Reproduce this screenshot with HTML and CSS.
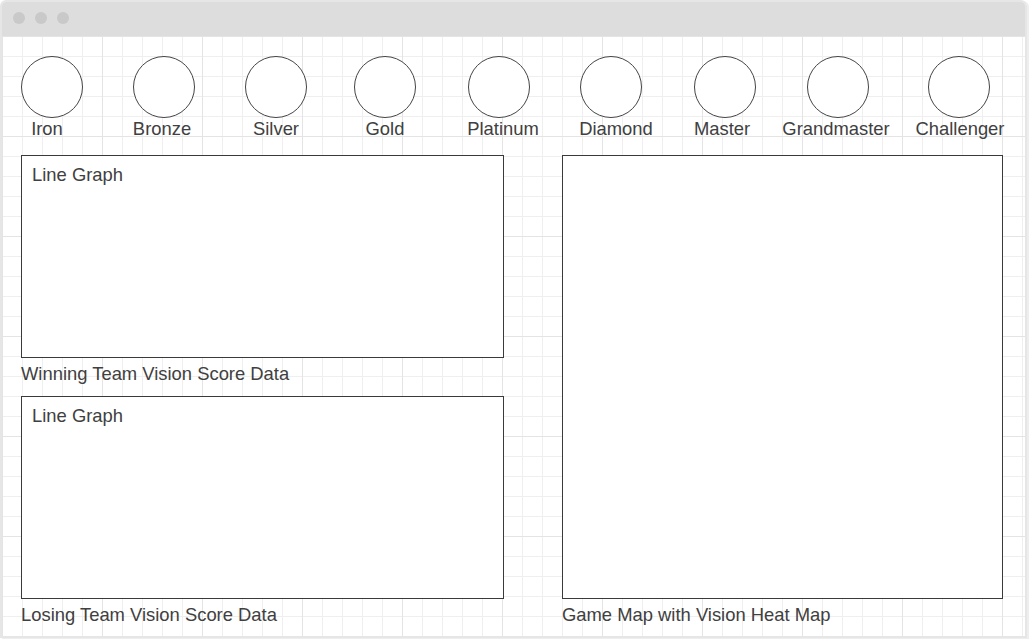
FILE: index.html
```html
<!DOCTYPE html>
<html lang="en">
<head>
<meta charset="utf-8">
<title>Vision Score Mockup</title>
<link rel="stylesheet" href="styles.css">
</head>
<body>
<div class="window">
  <div class="titlebar">
    <span class="dot"></span><span class="dot"></span><span class="dot"></span>
  </div>
  <div class="content">
    <div class="ranks">
      <div class="rank r1"><div class="circle"></div><div class="rank-label">Iron</div></div>
      <div class="rank r2"><div class="circle"></div><div class="rank-label">Bronze</div></div>
      <div class="rank r3"><div class="circle"></div><div class="rank-label">Silver</div></div>
      <div class="rank r4"><div class="circle"></div><div class="rank-label">Gold</div></div>
      <div class="rank r5"><div class="circle"></div><div class="rank-label">Platinum</div></div>
      <div class="rank r6"><div class="circle"></div><div class="rank-label">Diamond</div></div>
      <div class="rank r7"><div class="circle"></div><div class="rank-label">Master</div></div>
      <div class="rank r8"><div class="circle"></div><div class="rank-label">Grandmaster</div></div>
      <div class="rank r9"><div class="circle"></div><div class="rank-label">Challenger</div></div>
    </div>
    <div class="panels">
      <div class="box graph-win"><span class="box-title">Line Graph</span></div>
      <div class="caption cap-win">Winning Team Vision Score Data</div>
      <div class="box graph-lose"><span class="box-title">Line Graph</span></div>
      <div class="caption cap-lose">Losing Team Vision Score Data</div>
      <div class="box map"></div>
      <div class="caption cap-map">Game Map with Vision Heat Map</div>
    </div>
  </div>
</div>
</body>
</html>
```

FILE: styles.css
```css
* { box-sizing: border-box; }

html, body {
  margin: 0;
  padding: 0;
  background: #ffffff;
}

body {
  width: 1029px;
  height: 639px;
  overflow: hidden;
  font-family: "Liberation Sans", Arial, sans-serif;
  color: #404040;
}

.window {
  width: 1027px;
  height: 638px;
  border: 2px solid #e6e6e6;
  border-radius: 6px 6px 0 0;
  box-shadow: 2px 1px 0 #eeeeee;
  overflow: hidden;
  display: flex;
  flex-direction: column;
}

.titlebar {
  height: 34px;
  flex: none;
  background: #dddddd;
  display: flex;
  align-items: center;
  gap: 10px;
  padding-left: 11px;
  padding-bottom: 2px;
}

.dot {
  width: 12px;
  height: 12px;
  border-radius: 50%;
  background: #c9c9c9;
}

.content {
  flex: 1;
  background-color: #ffffff;
  background-image:
    linear-gradient(to right, #e4e4e4 1px, transparent 1px),
    linear-gradient(to bottom, #e4e4e4 1px, transparent 1px),
    linear-gradient(to right, #efefef 1px, transparent 1px),
    linear-gradient(to bottom, #efefef 1px, transparent 1px);
  background-size: 100px 100px, 100px 100px, 20px 20px, 20px 20px;
  padding: 20px 0 0 19px;
}

.ranks {
  display: flex;
  height: 99px;
}

.rank {
  width: 62px;
  flex: none;
  display: flex;
  flex-direction: column;
  align-items: center;
}

.r2 { margin-left: 50px; }
.r3 { margin-left: 50px; }
.r4 { margin-left: 47px; }
.r5 { margin-left: 52px; }
.r6 { margin-left: 50px; }
.r7 { margin-left: 52px; }
.r8 { margin-left: 51px; }
.r9 { margin-left: 59px; }

.circle {
  width: 62px;
  height: 62px;
  border: 1px solid #444444;
  border-radius: 50%;
  background: #ffffff;
  flex: none;
}

.rank-label {
  font-size: 18.4px;
  line-height: 22px;
  white-space: nowrap;
}

.r1 .rank-label { transform: translateX(-5px); }
.r2 .rank-label { transform: translateX(-2px); }
.r5 .rank-label { transform: translateX(4px); }
.r6 .rank-label { transform: translateX(5px); }
.r7 .rank-label { transform: translateX(-3px); }
.r8 .rank-label { transform: translateX(-2px); }
.r9 .rank-label { transform: translateX(1px); }

.panels {
  display: grid;
  grid-template-columns: 483px 441px;
  grid-template-rows: 203px 38px 203px auto;
  column-gap: 58px;
}

.box {
  border: 1px solid #3a3a3a;
  background: #ffffff;
  padding: 8px 10px;
}

.box-title {
  display: block;
  font-size: 18.4px;
  line-height: 22px;
}

.graph-win { grid-column: 1; grid-row: 1; }
.cap-win { grid-column: 1; grid-row: 2; }
.graph-lose { grid-column: 1; grid-row: 3; }
.cap-lose { grid-column: 1; grid-row: 4; }
.map { grid-column: 2; grid-row: 1 / 4; }
.cap-map { grid-column: 2; grid-row: 4; }

.caption {
  font-size: 18.4px;
  line-height: 22px;
  padding-top: 5px;
  white-space: nowrap;
}
```
